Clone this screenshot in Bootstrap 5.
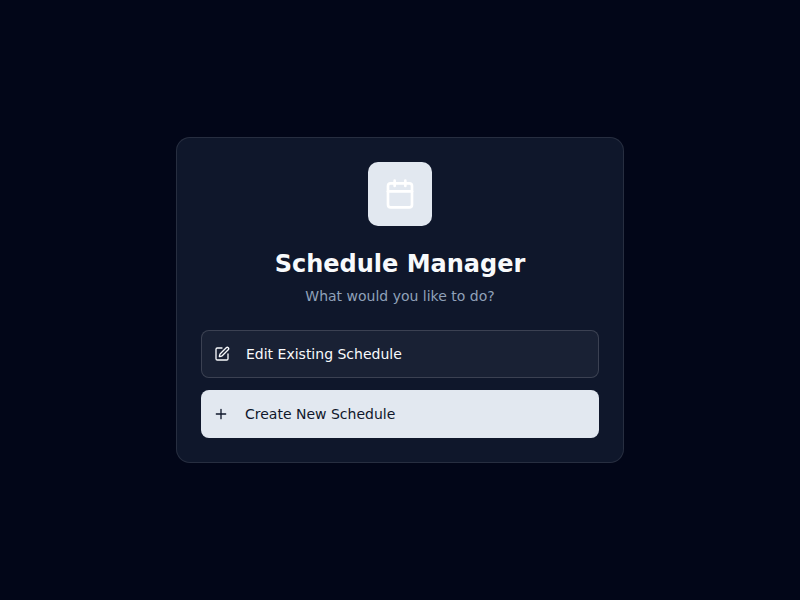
<!DOCTYPE html>
<html lang="en">
<head>
<meta charset="utf-8">
<meta name="viewport" content="width=device-width, initial-scale=1">
<title>Schedule Manager</title>
<link href="https://cdn.jsdelivr.net/npm/bootstrap@5.3.0/dist/css/bootstrap.min.css" rel="stylesheet">
<style>
body { background: #020618; font-family: "DejaVu Sans", sans-serif; }
.manager-card { width: 448px; background: #0f172b; border: 1px solid rgba(255,255,255,.1); border-radius: 14px; padding: 24px; color: #f8fafc; }
.logo-tile { width: 64px; height: 64px; background: #e2e8f0; border-radius: 10px; color: #fff; }
.manager-title { font-size: 24px; line-height: 32px; font-weight: 700; margin: 22px 0 6px; }
.manager-text { font-size: 14px; line-height: 20px; color: #90a1b9; }
.action-btn { --bs-btn-font-size: 14px; --bs-btn-font-weight: 500; --bs-btn-border-radius: 8px; height: 48px; padding: 0 12px; line-height: 20px; }
.action-edit { --bs-btn-color: #f8fafc; --bs-btn-bg: rgba(255,255,255,.045); --bs-btn-border-color: rgba(255,255,255,.15); --bs-btn-hover-color: #fff; --bs-btn-hover-bg: rgba(255,255,255,.08); }
.action-create { --bs-btn-color: #0f172b; --bs-btn-bg: #e2e8f0; --bs-btn-hover-bg: #cbd5e1; border-width: 0; }
svg { fill: none; stroke: currentColor; stroke-width: 2; stroke-linecap: round; stroke-linejoin: round; flex-shrink: 0; }
</style>
</head>
<body class="vh-100 d-flex align-items-center justify-content-center">
<main class="card manager-card">
  <div class="d-flex flex-column align-items-center text-center">
    <div class="logo-tile d-flex align-items-center justify-content-center">
      <svg width="32" height="32" viewBox="0 0 24 24"><path d="M8 2v4M16 2v4"/><rect width="18" height="18" x="3" y="4" rx="2"/><path d="M3 10h18"/></svg>
    </div>
    <h1 class="manager-title">Schedule Manager</h1>
    <p class="manager-text mb-4">What would you like to do?</p>
  </div>
  <div class="d-grid">
    <button type="button" class="btn action-btn action-edit d-flex align-items-center gap-3 mb-2">
      <svg width="16" height="16" viewBox="0 0 24 24"><path d="M12 3H5a2 2 0 0 0-2 2v14a2 2 0 0 0 2 2h14a2 2 0 0 0 2-2v-7"/><path d="M18.375 2.625a1 1 0 0 1 3 3l-9.013 9.014a2 2 0 0 1-.853.505l-2.873.84a.5.5 0 0 1-.62-.62l.84-2.873a2 2 0 0 1 .506-.852z"/></svg>
      Edit Existing Schedule
    </button>
    <button type="button" class="btn action-btn action-create d-flex align-items-center gap-3 mt-1">
      <svg width="16" height="16" viewBox="0 0 24 24"><path d="M5 12h14M12 5v14"/></svg>
      Create New Schedule
    </button>
  </div>
</main>
<script src="https://cdn.jsdelivr.net/npm/bootstrap@5.3.0/dist/js/bootstrap.bundle.min.js"></script>
</body>
</html>
